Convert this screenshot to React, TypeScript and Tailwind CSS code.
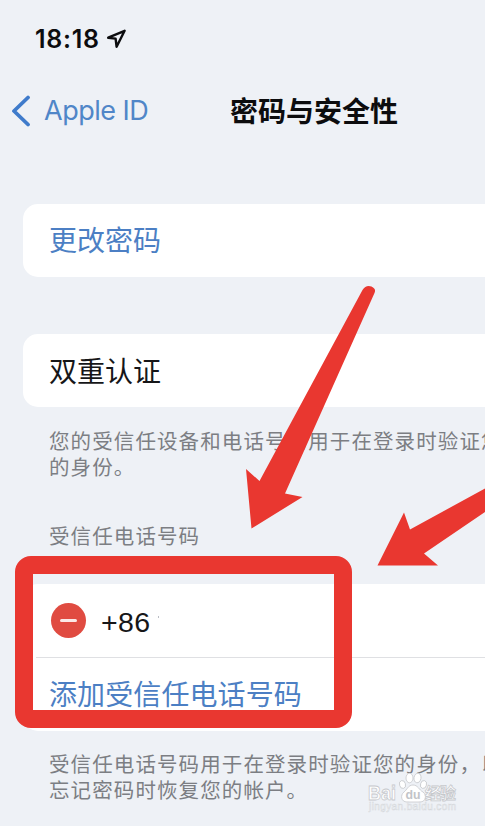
import type { ReactNode } from "react";

function StatusBar() {
  return (
    <div className="flex h-[78px] items-center gap-[7px] pl-[35px] text-[#0c0c0e]">
      <span className="w-[65px] whitespace-nowrap pt-[2px] font-['Inter'] text-[25px] font-semibold tracking-[0.7px]">18:18</span>
      <svg width="20" height="20" viewBox="0 0 20 20" fill="none" stroke="currentColor" strokeWidth="2.4" strokeLinejoin="round">
        <path d="M1.2 8.7 17.6 1.8 9.6 17.8 8.6 9.6Z" />
      </svg>
    </div>
  );
}

function NavBar() {
  return (
    <header className="flex h-[66px] items-center">
      <button className="flex w-[230px] items-center gap-[13px] pl-[11px] text-[#3f7bcb]">
        <svg width="20" height="32" viewBox="0 0 20 32" fill="none" stroke="currentColor" strokeWidth="3.8" strokeLinecap="round" strokeLinejoin="round">
          <path d="M17 2.500 3 16 17 29.500" />
        </svg>
        <span className="whitespace-nowrap pt-px font-['Inter'] text-[27px] tracking-[-0.5px] text-[#5086c8]">Apple ID</span>
      </button>
      <h1 className="whitespace-nowrap pb-[2px] text-[28px] font-bold text-[#0c0c0e]">密码与安全性</h1>
    </header>
  );
}

function Card({ children }: { children: ReactNode }) {
  return <section className="ml-[23px] rounded-l-[15px] bg-white pl-[26px] text-[28px]">{children}</section>;
}

function Note({ children }: { children: ReactNode }) {
  return (
    <p className="ml-[49px] whitespace-nowrap text-[20.5px] leading-[26px] tracking-[1.1px] text-[#7c7e83]">
      {children}
    </p>
  );
}

function Watermark() {
  return (
    <svg className="absolute left-[366px] top-[770px]" width="95" height="46" viewBox="0 0 95 46" fill="#fff" stroke="#c6c8cc" strokeWidth="0.8">
      <text x="2" y="30" fontFamily="Liberation Sans" fontWeight="bold" fontSize="20" textLength="28" lengthAdjust="spacingAndGlyphs">Bai</text>
      <path d="M47 15c-5 0-6 5-9 7-4 3-3 10 3 10h13c6 0 7-7 3-10-4-2-5-7-10-7Z" />
      <ellipse cx="36.500" cy="14.500" rx="3" ry="4" transform="rotate(-15 36.5 14.5)" />
      <ellipse cx="43.500" cy="8" rx="3.500" ry="4.800" />
      <ellipse cx="51.500" cy="8" rx="3.500" ry="4.800" transform="rotate(10 51.5 8)" />
      <ellipse cx="57.500" cy="14.500" rx="3" ry="4" transform="rotate(15 57.5 14.5)" />
      <text x="39.500" y="29" fontFamily="Liberation Sans" fontWeight="bold" fontSize="13" textLength="15" lengthAdjust="spacingAndGlyphs" stroke="none" fill="#c2c4c8">du</text>
      <text x="59" y="29" fontFamily="Noto Sans CJK SC" fontWeight="bold" fontSize="16" textLength="31">经验</text>
      <text x="3" y="40" fontFamily="Liberation Sans" fontSize="10" textLength="87" fill="#f8f9fb" stroke="#d5d8dc" strokeWidth="0.5">jingyan.baidu.com</text>
    </svg>
  );
}

function Markup() {
  return (
    <>
      <div className="absolute left-[15px] top-[556px] h-[172px] w-[337px] rounded-[16px] border-[18px] border-[#e93730]" />
      <svg className="absolute left-0 top-0" width="485" height="826" viewBox="0 0 485 826" fill="#e93730">
        <path d="M251.5 528.5 246 469 259.5 481 362.5 290Q366 284.5 371.5 286.500 376.5 289 374.5 293L285 493.500 302.500 497Z" />
        <path d="M377.500 565.500 404 512.500 410 529.500 485 488.500V512L424 553.500 438 565.500Z" />
      </svg>
    </>
  );
}

export default function App() {
  return (
    <div className="relative h-[826px] w-[485px] overflow-hidden bg-[#eef1f6] font-['Noto_Sans_CJK_SC',sans-serif]">
      <StatusBar />
      <NavBar />
      <main className="pt-[60px]">
        <Card>
          <div className="flex h-[73px] items-center pb-[3px] text-[#4c7fc4]">更改密码</div>
        </Card>
        <div className="h-[57px]" />
        <Card>
          <div className="flex h-[73px] items-center pb-px text-[#161618]">双重认证</div>
        </Card>
        <div className="h-[177px] pt-[20px]">
          <Note>
            您的受信任设备和电话号码用于在登录时验证您
            <br />
            的身份。
          </Note>
          <div className="h-[43px]" />
          <Note>受信任电话号码</Note>
        </div>
        <Card>
          <div className="flex h-[73px] items-center gap-[15px]">
            <span className="ml-[2px] flex size-[35px] items-center justify-center rounded-full bg-[#e04b41]">
              <span className="h-[3px] w-[17px] rounded-full bg-[#fbe9e7]" />
            </span>
            <span className="pt-[3px] font-['Liberation_Sans'] text-[28.5px] tracking-[0.4px] text-[#161618]">+86</span>
            <span className="-ml-[8px] mb-[8px] h-[2px] w-px bg-[#b9bcc4]" />
          </div>
          <div className="-ml-[13px] h-px bg-[#dfe0e3]" />
          <div className="flex h-[73px] items-center whitespace-nowrap pb-[3px] tracking-[0.1px] text-[#4c7fc4]">添加受信任电话号码</div>
        </Card>
        <div className="pt-[19px]">
          <Note>
            受信任电话号码用于在登录时验证您的身份，以
            <br />
            忘记密码时恢复您的帐户。
          </Note>
        </div>
      </main>
      <Watermark />
      <Markup />
    </div>
  );
}
